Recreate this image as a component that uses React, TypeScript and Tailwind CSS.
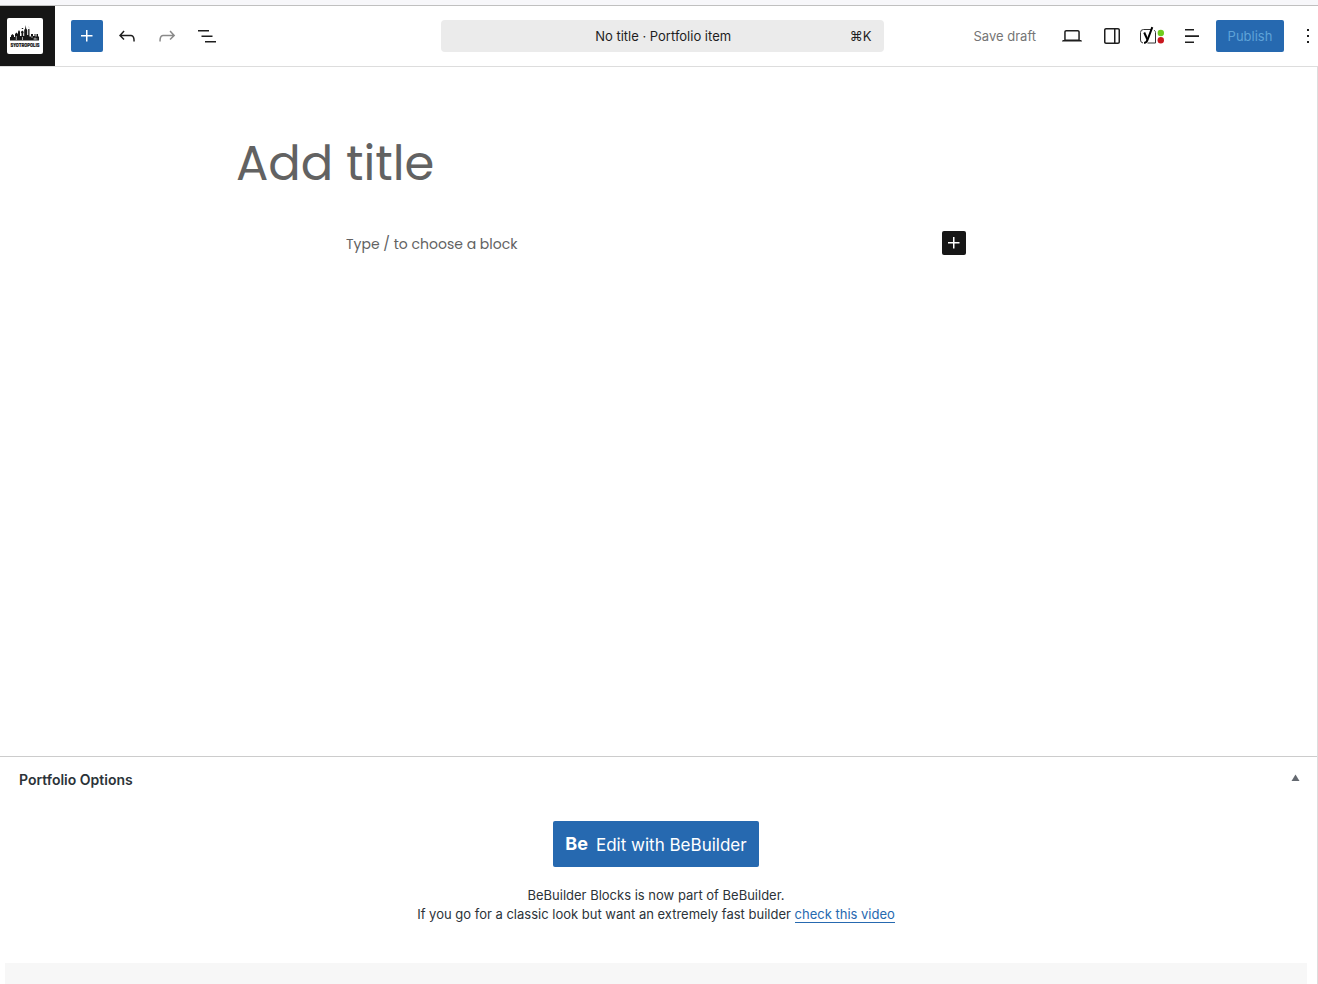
import { useState } from "react";
import type { ReactNode } from "react";


interface IIconProps {
    d: string;
    className?: string;
}

interface IToolButtonProps {
    label: string;
    disabled?: boolean;
    children: ReactNode;
}

const icons = {
    plus: "M11 12.5V17.5H12.5V12.5H17.5V11H12.5V6H11V11H6V12.5H11Z",
    undo: "M18.3 11.7c-.6-.6-1.4-.9-2.3-.9H6.7l2.9-3.3-1.1-1-4.5 5L8.5 16l1-1-2.7-2.7H16c.5 0 .9.2 1.3.5 1 1 1 3.4 1 4.5v.3h1.5v-.2c0-1.5 0-4.3-1.5-5.7z",
    redo: "M15.6 6.5l-1.1 1 2.9 3.3H8c-.9 0-1.7.3-2.3.9-1.4 1.5-1.4 4.2-1.4 5.6v.2h1.5v-.3c0-1.1 0-3.5 1-4.5.3-.3.7-.5 1.3-.5h9.2L14.5 15l1.1 1.1 4.6-4.6-4.6-5z",
    list: "M3 6h11v1.5H3V6Zm3.5 5.5h11V13h-11v-1.5ZM21 17H10v1.5h11V17Z",
    desktop: "M20.5 16h-.7V8c0-1.1-.9-2-2-2H6.2c-1.1 0-2 .9-2 2v8h-.7c-.8 0-1.5.7-1.5 1.5h20c0-.8-.7-1.5-1.5-1.5zM5.7 8c0-.3.2-.5.5-.5h11.6c.3 0 .5.2.5.5v7.6H5.7V8z",
    sidebar: "M18 4H6c-1.1 0-2 .9-2 2v12c0 1.1.9 2 2 2h12c1.1 0 2-.9 2-2V6c0-1.1-.9-2-2-2zm-4 14.5H6c-.3 0-.5-.2-.5-.5V6c0-.3.2-.5.5-.5h8v13zm4.5-.5c0 .3-.2.5-.5.5h-2.5v-13H18c.3 0 .5.2.5.5v12z",
    lines: "M5 5h9v1.6H5V5Zm0 6.3h14v1.6H5v-1.6ZM5 17.4h9V19H5v-1.6Z",
    more: "M13 19h-2v-2h2v2zm0-6h-2v-2h2v2zm0-6h-2V5h2v2z",
}

const Icon = ({ d, className = "size-6" }: IIconProps) => (
    <svg viewBox="0 0 24 24" fill="currentColor" aria-hidden="true" className={className}>
        <path d={d} />
    </svg>
)

const ToolButton = ({ label, disabled, children }: IToolButtonProps) => (
    <button
        type="button"
        aria-label={label}
        disabled={disabled}
        className="flex size-8 shrink-0 items-center justify-center rounded-xs disabled:text-[#8a8a8a]"
    >
        {children}
    </button>
)

const SiteLogo = () => (
    <svg viewBox="0 0 36 36" aria-hidden="true" className="size-9 rounded-xs bg-white">
        <path
            fill="#161616"
            d="M3 22.500v-3.500h1v-1.500l1.500-1.500 1.500 1.500V19h1v-3l1.500-1.500L11 16v-2l.5-1.500h1l.5 1.500v4h1.500v-2.500L13.800 14l1.500-1.500 1.500 1.500-.6 1.500V18h1V12l1-1.500.5-3.500.5 3.500 1 1.500v5h1v-6h1V10L21.600 7.500l.4 2.500.5 1.500v7H24v-2.500h2V18h1.500v-2h1v2.500h1V16H31v2.500h1v4z"
        />
        <path fill="#161616" d="M14.800 10h1.400v1h-1.400z" />
        <path stroke="#fff" strokeWidth=".6" d="M9.300 18v4M15.500 19v3M25 18v2M26.500 21h4M28 19.500v2" />
        <text
            x="18"
            y="29"
            textAnchor="middle"
            fontSize="5"
            fontWeight="700"
            fill="#161616"
            stroke="#161616"
            strokeWidth=".2"
            className="font-['Liberation_Sans_Narrow','Roboto_Condensed','Liberation_Sans',sans-serif]"
        >
            SYOTROPOLIS
        </text>
    </svg>
)

const YoastIcon = () => (
    <svg viewBox="0 0 26 24" fill="none" aria-hidden="true" className="h-6 w-[26px] shrink-0">
        <path
            stroke="#333"
            strokeWidth="1"
            d="M12.500 5.500H4.500a3 3 0 0 0-3 3v7.500a3 3 0 0 0 2.500 3M15 6.200c1 .5 1.500 1.300 1.500 2.300v10.500H8.500"
        />
        <path stroke="#000" strokeWidth="2" d="M5.200 8.500l3.200 7" />
        <path stroke="#000" strokeWidth="2" d="M13.300 3.200L8.700 15.500c-.7 2-1.600 3.200-3.600 3.400" />
        <circle cx="21.800" cy="9" r="3.200" fill="#6fcb1e" />
        <circle cx="21.800" cy="16.300" r="3.200" fill="#c9171e" />
    </svg>
)

const EditorHeader = () => (
    <header className="-mr-2 grid h-[61px] shrink-0 grid-cols-[1fr_443px_1fr] items-center border-b border-[#ddd] pr-[2px]">
        <div className="flex h-full items-center gap-4">
            <a href="#" aria-label="View portfolio" className="flex h-full w-[55px] items-center bg-[#161616] pl-[7px]">
                <SiteLogo />
            </a>
            <div className="flex items-center gap-2">
                <button
                    type="button"
                    aria-label="Block inserter"
                    className="flex size-8 items-center justify-center rounded-xs bg-[#2669b0] text-white"
                >
                    <Icon d={icons.plus} />
                </button>
                <ToolButton label="Undo"><Icon d={icons.undo} /></ToolButton>
                <ToolButton label="Redo" disabled><Icon d={icons.redo} /></ToolButton>
                <ToolButton label="Document overview"><Icon d={icons.list} /></ToolButton>
            </div>
        </div>
        <button type="button" className="flex h-8 items-center rounded-sm bg-[#ebebeb] px-3 pt-0.5">
            <span className="w-6" />
            <span className="flex-1">No title · Portfolio item</span>
            <span>⌘K</span>
        </button>
        <div className="flex items-center justify-end gap-2">
            <button type="button" disabled className="h-8 px-3 pt-0.5 text-[#757575]">Save draft</button>
            <ToolButton label="View"><Icon d={icons.desktop} /></ToolButton>
            <ToolButton label="Settings"><Icon d={icons.sidebar} /></ToolButton>
            <ToolButton label="Yoast SEO"><YoastIcon /></ToolButton>
            <ToolButton label="Page options"><Icon d={icons.lines} /></ToolButton>
            <button type="button" disabled className="h-8 w-[68px] rounded-xs bg-[#2669b0] pt-0.5 text-[#5fa3d8]">
                Publish
            </button>
            <ToolButton label="Options"><Icon d={icons.more} /></ToolButton>
        </div>
    </header>
)

const EditorCanvas = () => {
    const [title, setTitle] = useState("")
    const [content, setContent] = useState("")

    return (
        <main className="min-h-0 flex-1 overflow-hidden pr-[5px] pt-[61px] font-[Poppins,Inter,sans-serif]">
            <input
                aria-label="Add title"
                placeholder="Add title"
                value={title}
                onChange={(e) => setTitle(e.target.value)}
                className="mx-auto block h-[72px] w-full max-w-[840px] text-[48px] outline-none placeholder:text-[#626262] placeholder:opacity-100"
            />
            <div className="mx-auto mt-[31px] flex h-6 w-full max-w-[620px] items-center">
                <input
                    aria-label="Empty block"
                    placeholder="Type / to choose a block"
                    value={content}
                    onChange={(e) => setContent(e.target.value)}
                    className="h-6 flex-1 pt-0.5 text-sm outline-none placeholder:text-[#626262] placeholder:opacity-100"
                />
                <button
                    type="button"
                    aria-label="Add block"
                    className="flex size-6 items-center justify-center rounded-xs bg-[#161616] text-white"
                >
                    <Icon d={icons.plus} />
                </button>
            </div>
        </main>
    )
}

const PortfolioOptions = () => {
    const [open, setOpen] = useState<boolean>(true)

    return (
        <section className="shrink-0 border-t border-[#ccc] text-[#2c3338]">
            <div className="flex h-[46px] items-center justify-between pl-[19px] pr-[17px]">
                <h2 className="text-sm font-semibold">Portfolio Options</h2>
                <button type="button" aria-label="Toggle panel" aria-expanded={open} onClick={() => setOpen(!open)} className="pb-1.5">
                    <svg viewBox="0 0 9 9" fill="#646970" aria-hidden="true" className="size-[9px]">
                        <path d="M4.500 1.500L8.500 8H0.500z" />
                    </svg>
                </button>
            </div>
            {
                open && <div className="pl-[5px] pr-[10px] pt-[18px] text-center">
                    <button
                        type="button"
                        className="inline-flex h-[46px] items-center gap-2 rounded-xs bg-[#2669b0] px-3 text-[17px] text-white"
                    >
                        <span className="text-lg font-bold leading-5">Be</span>
                        <span className="pt-1">Edit with BeBuilder</span>
                    </button>
                    <p className="mt-[19px] leading-[19px]">
                        BeBuilder Blocks is now part of BeBuilder.
                        <br />
                        If you go for a classic look but want an extremely fast builder{" "}
                        <a href="#" className="border-b border-[#2669b0] text-[#2669b0]">check this video</a>
                    </p>
                    <div className="mt-[39px] h-[21px] bg-[#f7f7f7]" />
                </div>
            }
        </section>
    )
}

const App = () => {
    return (
        <div className="flex h-screen flex-col overflow-hidden bg-white font-[Inter,sans-serif] text-[13px] text-[#1e1e1e]">
            <div className="h-[6px] shrink-0 border-b border-[#c0c0c0] bg-[#f7f7fa]" />
            <EditorHeader />
            <div className="flex min-h-0 flex-1 flex-col border-r border-[#ddd]">
                <EditorCanvas />
                <PortfolioOptions />
            </div>
        </div>
    )
}


export default App;
